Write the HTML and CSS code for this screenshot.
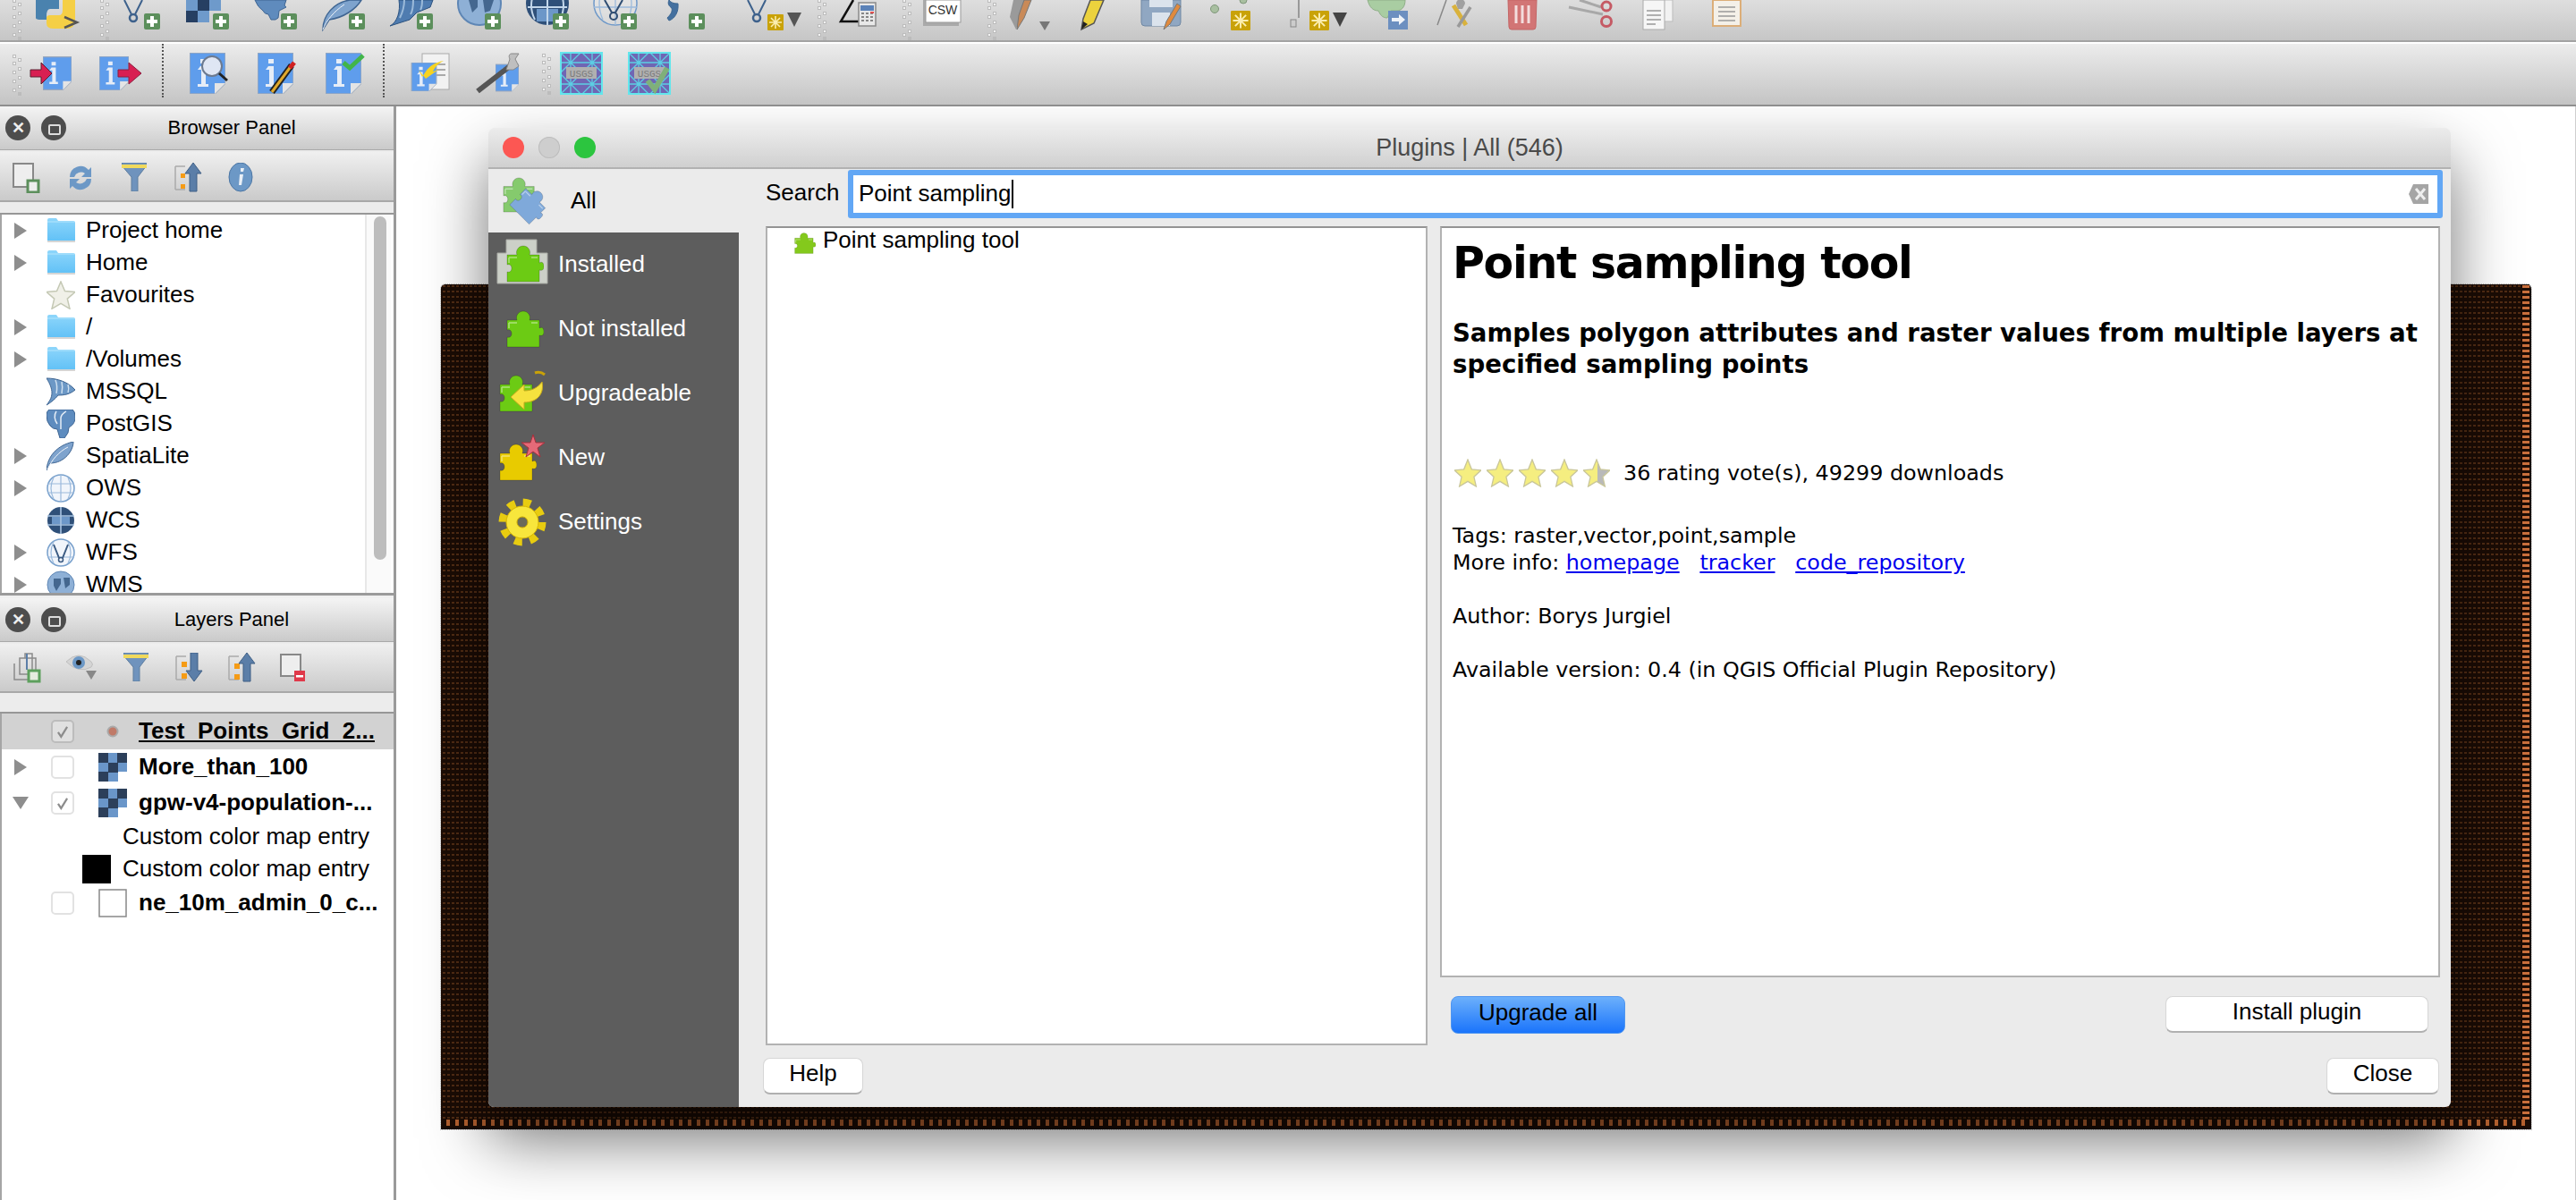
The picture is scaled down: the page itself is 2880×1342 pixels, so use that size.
FILE: index.html
```html
<!DOCTYPE html>
<html lang="en">
<head>
    <meta charset="UTF-8">
    <title>QGIS - Plugins</title>
    <link rel="stylesheet" href="styles.css">
</head>
<body>
<!-- shared icon parts -->
<svg class="defs">
    <defs>
        <linearGradient id="halfStar"><stop offset="55%" stop-color="#f5ee80"/><stop offset="55%" stop-color="#b9b9b9"/></linearGradient>
        <linearGradient id="folderFill" x1="0" y1="0" x2="0" y2="1"><stop offset="0" stop-color="#8ed6fb"/><stop offset="1" stop-color="#5fc0f6"/></linearGradient>
    </defs>
    <symbol id="plus" viewBox="0 0 18 18"><rect width="18" height="18" rx="2" fill="#5c8f5c"/><path d="M7 3h4v4h4v4h-4v4H7v-4H3V7h4z" fill="#fff"/></symbol>
    <symbol id="snow" viewBox="0 0 18 18"><rect width="18" height="18" rx="1" fill="#c9a208"/><path d="M9 2v14M2 9h14M4 4l10 10M14 4L4 14" stroke="#fbeeb0" stroke-width="1.6"/></symbol>
    <symbol id="grip" viewBox="0 0 12 48"><path d="M0 2h4v4H0zM6 6h4v4H6zM0 10h4v4H0zM6 16h4v4H6zM0 20h4v4H0zM6 26h4v4H6zM0 30h4v4H0zM6 36h4v4H6zM0 40h4v4H0zM6 44h4v4H6z" fill="#bcbcbc"/><path d="M1 3h2v2H1zM7 7h2v2H7zM1 11h2v2H1zM7 17h2v2H7zM1 21h2v2H1zM7 27h2v2H7zM1 31h2v2H1zM7 37h2v2H7zM1 41h2v2H1z" fill="#f2f2f2"/></symbol>
    <symbol id="page" viewBox="0 0 40 46"><path d="M0 0h40v34L28 46H0z" fill="#5f9dec" stroke="#9aa8bc" stroke-width="1.5"/><path d="M28 46V34h12z" fill="#e4e4e4"/><path d="M12 15h6v20h3v3H9v-3h4V19h-4zM12 7h6v5h-6z" fill="#e6edf7"/></symbol>
    <symbol id="puzzle" viewBox="0 0 42 42"><path d="M1 11h11c-2-5 2-10 7-10s9 5 7 10h11v9c3-2 5 0 5 4s-2 5-5 4v13H1V30c3 1 5-1 5-4s-2-5-5-4z" stroke="#00000030" stroke-width="1"/><path d="M3 14h9M28 14h7M3 14v6" stroke="#ffffff70" stroke-width="1.5" fill="none"/></symbol>
    <symbol id="folder" viewBox="0 0 32 28"><path d="M1 2q0-2 2-2h8l2 3h17q2 0 2 2v20q0 2-2 2H3q-2 0-2-2z" fill="url(#folderFill)"/><path d="M1 4h30" stroke="#b5e5fc" stroke-width="1"/><path d="M1 26h31" stroke="#d5d5d5" stroke-width="2"/></symbol>
    <symbol id="check" viewBox="0 0 26 26"><path d="M7 14l4 6 8-13" stroke="#8c8c8c" stroke-width="2.6" fill="none"/></symbol>
    <symbol id="raster" viewBox="0 0 32 32"><path d="M0 0h11v11H0zM21 0h11v11H21zM11 11h11v11H11zM0 21h11v11H0z" fill="#2c3f5a"/><path d="M11 0h10v11H11zM0 11h11v10H0zM22 11h10v10H22zM11 22h11v10H11z" fill="#6a96c9"/></symbol>
    <symbol id="star" viewBox="0 0 32 34"><path d="M16 1l4.600 11.500L32 13.600l-8.600 8 2.600 11.400L16 27l-10 6 2.600-11.400-8.600-8 11.400-1.100z" stroke="#c9c69a" stroke-width="1.4"/></symbol>
    <symbol id="usgs" viewBox="0 0 48 48"><rect width="48" height="48" fill="#6f66b4"/><path d="M0 0l48 48M48 0L0 48M24 0L0 24l24 24 24-24zM12 0v48M36 0v48M0 12h48M0 36h48" stroke="#5ccfe4" stroke-width="1.3" fill="none"/><rect x="1" y="1" width="46" height="46" fill="none" stroke="#62e6ec" stroke-width="2"/><rect x="7" y="17" width="34" height="13" fill="#b0b0b0"/></symbol>
    <symbol id="funnel" viewBox="0 0 28 32"><path d="M0 0h28v3L18 16v16h-7V16L0 3z" fill="#6f93bd" stroke="#5f7e9f"/><path d="M0 2h28v4H0z" fill="#f0d95c"/></symbol>
</svg>

<!-- main toolbar -->
<div class="bar bar-top">
    <svg width="12" height="45" viewBox="0 0 12 45"><use href="#grip" y="-3" width="12" height="48"/></svg>
    <svg width="86" height="45" viewBox="22 0 86 45"><path d="M36 20V0h26v10H52q-4 0-4 8v4h-6q-6 0-6-2z" fill="#4a82ae"/><path d="M66 0h14v22q0 10-10 10H56q-8 0-8-6v-6q0-3 4-3h10q4 0 4-6z" fill="#f5cf45"/><path d="M68 19l14 6-14 6" fill="none" stroke="#555" stroke-width="2.500"/></svg>
    <svg width="12" height="45" viewBox="0 0 12 45"><use href="#grip" y="-3" width="12" height="48"/></svg>
    <svg width="76" height="45" viewBox="120 0 76 45"><path d="M135 0l8 16M155 0l-8 16" stroke="#3d618c" stroke-width="2"/><circle cx="145" cy="20" r="4" fill="none" stroke="#3d618c" stroke-width="2.500"/><use href="#plus" x="157" y="15" width="18" height="18"/></svg>
    <svg width="76" height="45" viewBox="196 0 76 45"><path d="M204 0h13v12h-13zM230 0h13v12h-13zM217 12h13v13h-13z" fill="#6e9acb"/><path d="M217 0h13v12h-13zM204 12h13v13h-13z" fill="#263f62"/><use href="#plus" x="234" y="15" width="18" height="18"/></svg>
    <svg width="76" height="45" viewBox="272 0 76 45"><path d="M281 0h35l-2 6 2 2-8 4-1 8-3 2h-5l-3-6q-4 0-6-4-6-4-9-12z" fill="#5f8bbd" stroke="#3f6592"/><use href="#plus" x="310" y="15" width="18" height="18"/></svg>
    <svg width="76" height="45" viewBox="348 0 76 45"><path d="M357 33c0-16 12-30 30-33h13c-6 10-20 20-36 22z" fill="#7ea3cd" stroke="#3f6592" stroke-width="1.500"/><path d="M357 33c4-10 12-20 24-28" stroke="#eef3f9" fill="none"/><use href="#plus" x="386" y="15" width="18" height="18"/></svg>
    <svg width="76" height="45" viewBox="424 0 76 45"><path d="M432 29c8-4 12-16 10-29h38l-3 8-15 6-8 8z" fill="#4f7cb0" stroke="#2c527f"/><path d="M448 0c0 8-2 14-5 20M458 0c0 6 0 11-3 16M468 0c0 4 0 8-2 11" stroke="#9bbad9" stroke-width="2" fill="none"/><use href="#plus" x="462" y="15" width="18" height="18"/></svg>
    <svg width="76" height="45" viewBox="500 0 76 45"><circle cx="532" cy="4" r="24" fill="#8eb0d6" stroke="#5e86b5" stroke-width="2"/><path d="M520 0h10v8l-6 6zM536 0h12l-4 12-6 2z" fill="#44678f"/><use href="#plus" x="538" y="15" width="18" height="18"/></svg>
    <svg width="76" height="45" viewBox="576 0 76 45"><circle cx="608" cy="4" r="24" fill="#2f5079"/><path d="M596 10h24v14h-24z" fill="#6c97c8"/><path d="M586 8h44M608 -20v48M594 -10q-8 16 0 32M622 -10q8 16 0 32" stroke="#c2d6ea" stroke-width="2" fill="none"/><use href="#plus" x="614" y="15" width="18" height="18"/></svg>
    <svg width="76" height="45" viewBox="652 0 76 45"><circle cx="684" cy="4" r="24" fill="#fff" fill-opacity=".2" stroke="#6f99c9" stroke-width="1.500"/><path d="M660 8h48M684 -20v48M670 -14q-8 18 0 36M698 -14q8 18 0 36" stroke="#9dbbdc" stroke-width="1.300" fill="none"/><path d="M672 0l8 14M692 0l-8 14" stroke="#2f4d72" stroke-width="2"/><circle cx="682" cy="18" r="4" fill="none" stroke="#2f4d72" stroke-width="2"/><use href="#plus" x="690" y="15" width="18" height="18"/></svg>
    <svg width="76" height="45" viewBox="728 0 76 45"><path d="M744 0c2 3 5 4 10 4 1 10-4 17-10 19l-2-3c4-4 6-7 5-11-3-2-5-5-3-9z" fill="#44709f" stroke="#3b6590"/><use href="#plus" x="766" y="15" width="18" height="18"/></svg>
    <svg width="102" height="45" viewBox="804 0 102 45"><path d="M832 0l8 16M852 0l-8 16" stroke="#3d618c" stroke-width="2"/><circle cx="842" cy="20" r="4" fill="none" stroke="#3d618c" stroke-width="2.500"/><use href="#snow" x="854" y="16" width="18" height="18"/><path d="M876 14h16l-8 16z" fill="#555"/></svg>
    <svg width="24" height="45" viewBox="-4 0 24 45"><use href="#grip" y="-3" width="12" height="48"/></svg>
    <svg width="70" height="45" viewBox="930 0 70 45"><path d="M950 0l-14 24h20" fill="none" stroke="#111" stroke-width="2.500"/><rect x="956" y="3" width="19" height="26" fill="#e8e8e8" stroke="#8a8a8a" stroke-width="1.500"/><rect x="958" y="6" width="15" height="6" fill="#5b82b8"/><path d="M959 15h3M964 15h3M969 15h3M959 19h3M964 19h3M969 19h3M959 23h3M964 23h3M969 23h3" stroke="#666" stroke-width="1.500"/><rect x="969" y="13" width="4" height="2" fill="#e05050"/></svg>
    <svg width="24" height="45" viewBox="-5 0 24 45"><use href="#grip" y="-3" width="12" height="48"/></svg>
    <svg width="72" height="45" viewBox="1024 0 72 45"><rect x="1028" y="0" width="40" height="29" fill="#aaa"/><rect x="1031" y="0" width="39" height="25" fill="#fff" stroke="#999"/><text x="1050" y="16" class="csw-text" text-anchor="middle">CSW</text></svg>
    <svg width="24" height="45" viewBox="-4 0 24 45"><use href="#grip" y="-3" width="12" height="48"/></svg>
    <svg width="70" height="45" viewBox="1120 0 70 45"><path d="M1132 33l-7-14 4-19h14z" fill="#9a9a9a"/><path d="M1133 33l2-16 6-17h8l-8 20z" fill="#c98a58" stroke="#777"/><path d="M1158 24h12l-6 10z" fill="#777"/></svg>
    <svg width="70" height="45" viewBox="1190 0 70 45"><path d="M1205 33l2-12 8-21h15l-11 26z" fill="#ecd23d" stroke="#555" stroke-width="1.500"/><path d="M1205 33l2-9 5 3z" fill="#222"/></svg>
    <svg width="76" height="45" viewBox="1260 0 76 45"><path d="M1272 0h44v25q0 4-4 4h-36q-4 0-4-4z" fill="#90a7c2" stroke="#6f87a3"/><rect x="1284" y="14" width="20" height="15" fill="#dbe3ec"/><rect x="1281" y="0" width="26" height="8" fill="#dbe3ec"/><path d="M1297 33l3-9 12-20 4 3-12 20z" fill="#e08a3e" stroke="#777"/></svg>
    <svg width="84" height="45" viewBox="1336 0 84 45"><circle cx="1354" cy="10" r="4.500" fill="#a8bfa0" stroke="#7f967a"/><circle cx="1386" cy="0" r="4" fill="#a8bfa0" stroke="#7f967a"/><use href="#snow" x="1372" y="12" width="22" height="22"/></svg>
    <svg width="96" height="45" viewBox="1420 0 96 45"><path d="M1448 0v20" stroke="#999" stroke-width="2"/><rect x="1439" y="22" width="6" height="8" fill="#ccc" stroke="#888"/><use href="#snow" x="1460" y="12" width="22" height="22"/><path d="M1486 14h16l-8 16z" fill="#444"/></svg>
    <svg width="76" height="45" viewBox="1516 0 76 45"><path d="M1525 0h42c0 8-4 12-10 12h-6l-4 8c-6 0-8-4-10-8-6 0-10-4-12-12z" fill="#a9cda2" stroke="#8fae88"/><rect x="1548" y="12" width="22" height="21" fill="#6c8fc0"/><path d="M1552 20h8v-4l7 6-7 6v-4h-8z" fill="#eef2f8"/></svg>
    <svg width="76" height="45" viewBox="1592 0 76 45"><path d="M1603 28l10-28" stroke="#888" stroke-width="1.500"/><path d="M1621 6l14 22" stroke="#d9b23c" stroke-width="5"/><path d="M1640 8l-14 22" stroke="#999" stroke-width="3.500"/><path d="M1624 4a5 5 0 0 1 10 0l-3 6h-5z" fill="#a0a0a0"/></svg>
    <svg width="72" height="45" viewBox="1668 0 72 45"><path d="M1682 0h32l-1 30q0 3-3 3h-24q-3 0-3-3z" fill="#d27575" stroke="#c36565"/><path d="M1691 6v20M1698 6v20M1705 6v20" stroke="#f3dddd" stroke-width="3"/></svg>
    <svg width="76" height="45" viewBox="1740 0 76 45"><path d="M1750 8l38 8M1762 0l24 8" stroke="#a8a8a8" stroke-width="3"/><circle cx="1792" cy="7" r="5" fill="none" stroke="#c55a64" stroke-width="3"/><circle cx="1792" cy="24" r="5.500" fill="none" stroke="#c55a64" stroke-width="3"/></svg>
    <svg width="80" height="45" viewBox="1816 0 80 45"><rect x="1846" y="0" width="20" height="24" fill="#f2f2f2" stroke="#bbb"/><rect x="1833" y="0" width="24" height="33" fill="#f6f6f6" stroke="#aaa"/><path d="M1837 12h16M1837 17h16M1837 22h16M1837 27h10" stroke="#999" stroke-width="1.500"/></svg>
    <svg width="74" height="45" viewBox="1896 0 74 45"><rect x="1911" y="0" width="31" height="29" fill="#f4f0e8" stroke="#dcae78" stroke-width="2"/><path d="M1917 8h19M1917 13h19M1917 18h19M1917 23h19" stroke="#999" stroke-width="1.500"/></svg>
</div>

<div class="bar bar-second">
    <svg width="15" height="68" viewBox="0 0 15 68"><use href="#grip" y="10" width="12" height="48"/></svg>
    <svg width="81" height="68" viewBox="29 49 81 68"><use href="#page" x="48" y="63" width="32" height="38"/><path d="M34 78h12v-8l12 12-12 12v-8H34z" fill="#d81f52" stroke="#5a2030"/></svg>
    <svg width="71" height="68" viewBox="110 49 71 68"><use href="#page" x="111" y="63" width="33" height="38"/><path d="M132 78h12v-8l14 12-14 12v-8h-12z" fill="#d81f52" stroke="#8a2040"/></svg>
    <span class="sep"></span>
    <svg width="75" height="68" viewBox="183 49 75 68"><use href="#page" x="210" y="59" width="40" height="46"/><circle cx="235" cy="74" r="11" fill="#dfe6f4" stroke="#6c7a90" stroke-width="2"/><path d="M243 82l9 8" stroke="#222" stroke-width="3"/></svg>
    <svg width="76" height="68" viewBox="258 49 76 68"><use href="#page" x="286" y="59" width="40" height="46"/><path d="M302 103l22-30" stroke="#222" stroke-width="7"/><path d="M302 103l22-30" stroke="#e0a82c" stroke-width="3"/><path d="M322 76l5-6" stroke="#d02020" stroke-width="5"/></svg>
    <svg width="92" height="68" viewBox="334 49 92 68"><use href="#page" x="362" y="59" width="40" height="46"/><path d="M382 70l7 6 15-14" fill="none" stroke="#41b54a" stroke-width="5"/></svg>
    <span class="sep"></span>
    <svg width="100" height="68" viewBox="430 49 100 68"><rect x="470" y="60" width="30" height="40" fill="#f2f2f2" stroke="#aaa"/><path d="M478 72h18M478 78h18M478 84h18" stroke="#aaa" stroke-width="2"/><use href="#page" x="456" y="70" width="32" height="32"/><path d="M466 78l4 8 4-6c4-6 10-10 20-12-8 4-10 8-12 12l6-2-14 10z" fill="#f7d320"/><rect x="456" y="102" width="42" height="3" fill="#ccc"/></svg>
    <svg width="70" height="68" viewBox="530 49 70 68"><use href="#page" x="552" y="70" width="26" height="34"/><path d="M532 102l36-28" stroke="#555" stroke-width="6"/><path d="M564 78l4-12c-2-4 0-6 2-6l8 0-4 6 4 8-6 4z" fill="#bfbfbf" stroke="#888"/></svg>
    <svg width="24" height="68" viewBox="-4 0 24 68"><use href="#grip" y="9" width="12" height="48"/></svg>
    <svg width="76" height="68" viewBox="624 49 76 68"><use href="#usgs" x="624" y="58" width="48" height="48"/><text x="648" y="85.500" class="usgs-text" text-anchor="middle">USGS</text></svg>
    <svg width="76" height="68" viewBox="700 49 76 68"><use href="#usgs" x="700" y="58" width="48" height="48"/><text x="724" y="85.500" class="usgs-text" text-anchor="middle">USGS</text><path d="M722 90l8 10 14-24" fill="none" stroke="#7fb07a" stroke-width="6"/></svg>
</div>

<div class="main">
    <div class="dock">
        <!-- browser panel -->
        <div class="panel-title">
            <span class="dock-btn">&#10005;</span>
            <span class="dock-btn dock-float"></span>
            <span class="panel-name">Browser Panel</span>
        </div>
        <div class="panel-tools">
            <svg width="32" height="34" viewBox="0 0 32 34"><rect x="1" y="1" width="22" height="26" fill="#eee" stroke="#888" stroke-width="2"/><rect x="17" y="20" width="12" height="13" fill="#eee" stroke="#5c8f5c" stroke-width="3"/></svg>
            <svg width="32" height="34" viewBox="0 0 32 34"><path d="M4 16A12 12 0 0 1 25 8l3-3v11H17l4-4A8 8 0 0 0 9 16zM28 18a12 12 0 0 1-21 8l-3 3V18h11l-4 4a8 8 0 0 0 12-4z" fill="#6c98c6"/></svg>
            <svg width="32" height="34" viewBox="0 0 32 34"><use href="#funnel" x="2" y="0" width="28" height="32"/></svg>
            <svg width="32" height="34" viewBox="0 0 32 34"><path d="M2 4h11M2 30h11M2 4v26" stroke="#aaa" stroke-width="1.500" fill="none"/><path d="M8 12h5v5H8zM8 24h5v5H8z" fill="#f59b15"/><path d="M22 0l9 12h-5v20h-8V12h-5z" fill="#5b7ea8" stroke="#3f5f85"/></svg>
            <svg width="32" height="34" viewBox="0 0 32 34"><ellipse cx="15" cy="16" rx="13" ry="16" fill="#6c98c6" stroke="#4c76a4"/><path d="M14 13h4l-2 12h-3zM15 6h4l-1 4h-3z" fill="#e9eff6"/></svg>
        </div>
        <div class="panel-strip"></div>
        <div class="tree">
            <div class="tree-rows">
                <div class="row"><span class="tw"></span><svg class="ico" viewBox="0 0 32 28"><use href="#folder"/></svg>Project home</div>
                <div class="row"><span class="tw"></span><svg class="ico" viewBox="0 0 32 28"><use href="#folder"/></svg>Home</div>
                <div class="row"><span class="tw-none"></span><svg class="ico" viewBox="0 0 32 32"><path d="M16 1l4.500 10.500L32 12.500l-8.700 7.600 2.700 11.200-10-6-10 6 2.700-11.200L0 12.500l11.500-1z" fill="#f0f0e8" stroke="#c4c8b4" stroke-width="1.500"/></svg>Favourites</div>
                <div class="row"><span class="tw"></span><svg class="ico" viewBox="0 0 32 28"><use href="#folder"/></svg>/</div>
                <div class="row"><span class="tw"></span><svg class="ico" viewBox="0 0 32 28"><use href="#folder"/></svg>/Volumes</div>
                <div class="row"><span class="tw-none"></span><svg class="ico" viewBox="0 0 32 32"><path d="M0 1c12 0 24 4 32 13-6 5-12 6-19 6-3 4-8 8-13 11 5-6 6-10 6-14S4 7 0 1z" fill="#6c98c6" stroke="#3f6592"/><path d="M10 3c2 5 2 10 1 15M17 5c1 4 1 8 0 13M24 8c1 3 1 6 0 9" stroke="#cfe0f0" stroke-width="1.500" fill="none"/></svg>MSSQL</div>
                <div class="row"><span class="tw-none"></span><svg class="ico" viewBox="0 0 32 32"><path d="M3 0h26q3 2 3 8c0 8-4 10-7 12l-1 6-4 6h-5l-3-10q-5 0-8-4Q0 14 0 6q0-4 3-6z" fill="#5e8cbf" stroke="#3f6592"/><path d="M11 2c-3 4-2 10 1 14M22 2c-3 2-6 3-6 8v12" stroke="#e5edf6" stroke-width="1.500" fill="none"/></svg>PostGIS</div>
                <div class="row"><span class="tw"></span><svg class="ico" viewBox="0 0 32 32"><path d="M0 32C1 16 12 4 30 0c0 10-10 24-26 24z" fill="#7ea3cd" stroke="#3f6592"/><path d="M1 31C6 20 14 11 24 6" stroke="#eef3f9" fill="none"/></svg>SpatiaLite</div>
                <div class="row"><span class="tw"></span><svg class="ico" viewBox="0 0 32 32"><circle cx="16" cy="16" r="15" fill="#f1f5fb" stroke="#78a0cc" stroke-width="1.500"/><path d="M1 11h30M1 21h30M16 1v30M8 4q-6 12 0 24M24 4q6 12 0 24" stroke="#9bbadc" fill="none" stroke-width="1.200"/></svg>OWS</div>
                <div class="row"><span class="tw-none"></span><svg class="ico" viewBox="0 0 32 32"><circle cx="16" cy="16" r="15" fill="#2f5079"/><path d="M6 12h20v8H6z" fill="#6c97c8"/><path d="M1 11h30M1 21h30M16 1v30" stroke="#a8c4e2" stroke-width="1.600"/></svg>WCS</div>
                <div class="row"><span class="tw"></span><svg class="ico" viewBox="0 0 32 32"><circle cx="16" cy="16" r="15" fill="#f1f5fb" stroke="#78a0cc" stroke-width="1.500"/><path d="M1 21h30M8 4q-6 12 0 24M24 4q6 12 0 24" stroke="#9bbadc" fill="none" stroke-width="1.200"/><path d="M8 7l6 15M24 7l-6 15" stroke="#3b5b82" stroke-width="2"/><circle cx="16" cy="24" r="2.500" fill="none" stroke="#3b5b82" stroke-width="1.500"/></svg>WFS</div>
                <div class="row"><span class="tw"></span><svg class="ico" viewBox="0 0 32 32"><circle cx="16" cy="16" r="15" fill="#8eb0d6" stroke="#5e86b5"/><path d="M8 9h8v6l-5 8-3-6zM19 8h7v8l-5 4z" fill="#44678f"/></svg>WMS</div>
            </div>
            <div class="gutter"><div class="thumb"></div></div>
        </div>
        <div class="panel-gap"></div>

        <!-- layers panel -->
        <div class="panel-title">
            <span class="dock-btn">&#10005;</span>
            <span class="dock-btn dock-float"></span>
            <span class="panel-name">Layers Panel</span>
        </div>
        <div class="panel-tools panel-tools-layers">
            <svg width="32" height="34" viewBox="0 0 32 34"><path d="M2 12v18h18M8 6v18h18V6zM14 6V1h8v22" fill="none" stroke="#8a8a8a" stroke-width="1.500"/><path d="M16 1v18" stroke="#5b7ea8" stroke-width="2"/><rect x="18" y="20" width="12" height="12" fill="#e5ecdf" stroke="#5da05d" stroke-width="3"/></svg>
            <svg width="36" height="34" viewBox="0 0 36 34"><path d="M1 10q14-14 28 0 3 3 0 6-14 8-28-6z" fill="#d5d5d5" stroke="#c0c0c0"/><circle cx="15" cy="11" r="7" fill="#6c98c6"/><circle cx="15" cy="11" r="3" fill="#222"/><path d="M23 20h12l-6 10z" fill="#888"/></svg>
            <svg width="32" height="34" viewBox="0 0 32 34"><use href="#funnel" x="2" y="0" width="28" height="32"/></svg>
            <svg width="32" height="34" viewBox="0 0 32 34"><path d="M2 4h11M2 30h11M2 4v26" stroke="#aaa" stroke-width="1.500" fill="none"/><path d="M8 10h6v6H8zM8 23h6v6H8z" fill="#f59b15"/><path d="M22 32l9-12h-5V0h-8v20h-5z" fill="#5b7ea8" stroke="#3f5f85"/></svg>
            <svg width="32" height="34" viewBox="0 0 32 34"><path d="M2 4h11M2 30h11M2 4v26" stroke="#aaa" stroke-width="1.500" fill="none"/><path d="M8 12h6v6H8zM8 24h6v6H8z" fill="#f59b15"/><path d="M22 0l9 12h-5v20h-8V12h-5z" fill="#5b7ea8" stroke="#3f5f85"/></svg>
            <svg width="32" height="34" viewBox="0 0 32 34"><rect x="1" y="2" width="22" height="24" fill="#eee" stroke="#888" stroke-width="2"/><rect x="16" y="20" width="12" height="12" fill="#e0394a"/><rect x="18" y="25" width="8" height="2.500" fill="#fff"/></svg>
        </div>
        <div class="panel-strip panel-strip-layers"></div>
        <div class="layers">
            <div class="layer layer-on">
                <span class="tw-none"></span>
                <span class="chk chk-sel"><svg viewBox="0 0 26 26"><use href="#check"/></svg></span>
                <svg class="ico-layer" viewBox="0 0 32 32"><circle cx="16" cy="16" r="5.500" fill="#c07a68" stroke="#aaa" stroke-width="2"/></svg>
                <b class="cur">Test_Points_Grid_2...</b>
            </div>
            <div class="layer">
                <span class="tw"></span>
                <span class="chk"></span>
                <svg class="ico-layer" viewBox="0 0 32 32"><use href="#raster"/></svg>
                <b>More_than_100</b>
            </div>
            <div class="layer">
                <span class="tw tw-open"></span>
                <span class="chk"><svg viewBox="0 0 26 26"><use href="#check"/></svg></span>
                <svg class="ico-layer" viewBox="0 0 32 32"><use href="#raster"/></svg>
                <b>gpw-v4-population-...</b>
            </div>
            <div class="legend"><span class="swatch swatch-none"></span>Custom color map entry</div>
            <div class="legend"><span class="swatch"></span>Custom color map entry</div>
            <div class="layer">
                <span class="tw-none"></span>
                <span class="chk"></span>
                <svg class="ico-layer" viewBox="0 0 32 32"><rect x="1" y="1" width="30" height="30" fill="#fff" stroke="#888" stroke-width="1.500"/></svg>
                <b>ne_10m_admin_0_c...</b>
            </div>
        </div>
    </div>

    <div class="map">
        <div class="canvas"></div>

        <!-- plugins dialog -->
        <div class="dialog">
            <div class="titlebar">
                <span class="light light-red"></span>
                <span class="light light-grey"></span>
                <span class="light light-green"></span>
                <span class="dialog-title">Plugins | All (546)</span>
            </div>
            <div class="dialog-body">
                <div class="side">
                    <div class="side-all">
                        <svg width="92" height="71" viewBox="0 0 92 71">
                            <use href="#puzzle" x="16" y="8" width="40" height="42" fill="#85ca6d"/>
                            <g transform="rotate(45 48 40)"><use href="#puzzle" x="30" y="22" width="36" height="36" fill="#7fa9da"/></g>
                        </svg>
                        <span>All</span>
                    </div>
                    <div class="side-list">
                        <div class="side-item">
                            <svg width="78" height="72" viewBox="0 0 78 72"><path d="M20 8h34v15h12v34H10V23h10z" fill="#ccd0c8" stroke="#a8aaa4"/><use href="#puzzle" x="20" y="14" width="42" height="42" fill="#6ccb14"/></svg>
                            Installed
                        </div>
                        <div class="side-item">
                            <svg width="78" height="72" viewBox="0 0 78 72"><use href="#puzzle" x="20" y="15" width="42" height="42" fill="#6ccb14"/></svg>
                            Not installed
                        </div>
                        <div class="side-item">
                            <svg width="78" height="72" viewBox="0 0 78 72"><use href="#puzzle" x="12" y="15" width="42" height="42" fill="#6ccb14"/><path d="M25 40l15-14v7c8 0 15-3 20-10 3 15-7 23-20 23v8z" fill="#f6e23e" stroke="#c3a81e"/><path d="M52 13q6-2 11 2" stroke="#c9a208" stroke-width="3" fill="none"/></svg>
                            Upgradeable
                        </div>
                        <div class="side-item">
                            <svg width="78" height="72" viewBox="0 0 78 72"><use href="#puzzle" x="12" y="20" width="42" height="42" fill="#e8cb00"/><path d="M50 10l3 9 10 0-8 6 3 10-8-6-8 6 3-10-8-6 10 0z" fill="#e56a78" stroke="#a8303c"/></svg>
                            New
                        </div>
                        <div class="side-item">
                            <svg width="78" height="72" viewBox="0 0 78 72"><circle cx="38" cy="36" r="21" fill="none" stroke="#e8cc10" stroke-width="11" stroke-dasharray="8.250 8.250"/><circle cx="38" cy="36" r="18" fill="#f8e63c" stroke="#d6b400" stroke-width="1"/><circle cx="38" cy="36" r="6" fill="#6a6a5a" stroke="#c7a400"/></svg>
                            Settings
                        </div>
                    </div>
                </div>
                <div class="content">
                    <div class="search-row">
                        <label class="search-label">Search</label>
                        <div class="search-box">
                            <span class="search-text">Point sampling</span><span class="caret"></span>
                            <svg class="clear" width="24" height="24" viewBox="0 0 24 24"><path d="M6 1h17v22H6L1 12z" fill="#a5a5a5"/><path d="M9 6l10 12M19 6L9 18" stroke="#eee" stroke-width="3"/></svg>
                        </div>
                    </div>
                    <div class="panes">
                        <div class="plugin-list">
                            <div class="plugin-row">
                                <svg width="24" height="24" viewBox="0 0 42 42"><use href="#puzzle" fill="#84c91c"/></svg>
                                Point sampling tool
                            </div>
                        </div>
                        <div class="right">
                            <div class="detail">
                                <h1>Point sampling tool</h1>
                                <p class="lead">Samples polygon attributes and raster values from multiple layers at specified sampling points</p>
                                <div class="rating">
                                    <span class="stars">
                                        <svg viewBox="0 0 32 34"><use href="#star" fill="#f5ee80"/></svg>
                                        <svg viewBox="0 0 32 34"><use href="#star" fill="#f5ee80"/></svg>
                                        <svg viewBox="0 0 32 34"><use href="#star" fill="#f5ee80"/></svg>
                                        <svg viewBox="0 0 32 34"><use href="#star" fill="#f5ee80"/></svg>
                                        <svg viewBox="0 0 32 34"><use href="#star" fill="url(#halfStar)"/></svg>
                                    </span>
                                    36 rating vote(s), 49299 downloads
                                </div>
                                <p class="meta">Tags: raster,vector,point,sample<br>More info: <a href="#">homepage</a>&nbsp;&nbsp; <a href="#">tracker</a>&nbsp;&nbsp; <a href="#">code_repository</a></p>
                                <p class="meta meta-next">Author: Borys Jurgiel</p>
                                <p class="meta meta-next">Available version: 0.4 (in QGIS Official Plugin Repository)</p>
                            </div>
                            <div class="actions">
                                <button class="btn btn-blue">Upgrade all</button>
                                <button class="btn btn-install">Install plugin</button>
                            </div>
                        </div>
                    </div>
                    <div class="footer">
                        <button class="btn btn-small">Help</button>
                        <button class="btn btn-small">Close</button>
                    </div>
                </div>
            </div>
        </div>
    </div>
</div>
</body>
</html>
```

FILE: styles.css
```css
html, body {
    margin: 0;
    padding: 0;
}

body {
    width: 2880px;
    height: 1342px;
    overflow: hidden;
    background: #fff;
    font: 26px/1.2 "Liberation Sans", Arial, sans-serif;
    color: #000;
    display: flex;
    flex-direction: column;
}

svg {
    display: block;
    flex: none;
}

.defs {
    position: absolute;
    width: 0;
    height: 0;
}

.usgs-text {
    font: 11px "Liberation Mono", monospace;
    fill: #7c7c7c;
}

.csw-text {
    font: 14px "Liberation Sans", sans-serif;
    fill: #333;
}

/* toolbars */
.bar {
    display: flex;
    flex: none;
    padding-left: 14px;
    box-sizing: border-box;
}

.bar-top {
    height: 47px;
    border-bottom: 2px solid #a2a2a2;
    background: linear-gradient(#dedede, #c6c6c6);
}

.bar-second {
    height: 72px;
    border-top: 2px solid #fff;
    border-bottom: 2px solid #8e8e8e;
    background: linear-gradient(#ececec, #c4c4c4);
}

.sep {
    width: 0;
    height: 60px;
    margin: 0 2px 0 0;
    border-left: 2px dotted #555;
}

/* left dock */
.main {
    display: flex;
    flex: 1;
    min-height: 0;
}

.dock {
    width: 443px;
    flex: none;
    box-sizing: border-box;
    border-right: 3px solid #9a9a9a;
    display: flex;
    flex-direction: column;
    background: #ececec;
}

.panel-title {
    height: 49px;
    flex: none;
    display: flex;
    align-items: center;
    padding-left: 6px;
    box-sizing: border-box;
    border-bottom: 1px solid #a9a9a9;
    background: linear-gradient(#f4f4f4, #cacaca);
}

.dock-btn {
    width: 28px;
    height: 28px;
    margin-right: 12px;
    border-radius: 50%;
    background: #4d4d4d;
    color: #eee;
    font-size: 18px;
    font-weight: bold;
    line-height: 28px;
    text-align: center;
}

.dock-float {
    position: relative;
}

.dock-float::after {
    content: "";
    position: absolute;
    left: 8px;
    top: 10px;
    width: 10px;
    height: 8px;
    border: 2px solid #ddd;
    border-radius: 2px;
}

.panel-name {
    flex: 1;
    padding-right: 8px;
    text-align: center;
    font-size: 22px;
}

.panel-tools {
    height: 56px;
    flex: none;
    box-sizing: border-box;
    margin-top: 2px;
    padding: 12px 0 0 14px;
    display: flex;
    gap: 28px;
    border-bottom: 2px solid #a8a8a8;
    background: linear-gradient(#f0f0f0, #cacaca);
}

.panel-tools-layers {
    height: 55px;
    padding-top: 10px;
    gap: 27px;
}

.panel-strip {
    height: 12px;
    flex: none;
    border-bottom: 2px solid #979797;
}

.panel-strip-layers {
    height: 21px;
}

.tree {
    height: 423px;
    flex: none;
    display: flex;
    overflow: hidden;
    background: #fff;
    border-left: 2px solid #a5a5a5;
}

.tree-rows {
    flex: 1;
    min-width: 0;
}

.row {
    height: 36px;
    display: flex;
    align-items: center;
    padding-left: 14px;
    white-space: nowrap;
}

.tw, .tw-none {
    width: 14px;
    height: 18px;
    margin-right: 22px;
    flex: none;
}

.tw {
    background: #8e8e8e;
    clip-path: polygon(0 0, 100% 50%, 0 100%);
}

.tw-open {
    width: 18px;
    height: 14px;
    margin-left: -2px;
    clip-path: polygon(0 0, 100% 0, 50% 100%);
}

.ico {
    width: 32px;
    height: 32px;
    margin-right: 12px;
}

.gutter {
    width: 29px;
    flex: none;
    margin-right: 3px;
    box-sizing: border-box;
    padding: 2px 5px 0 8px;
    border-left: 2px solid #e8e8e8;
    background: #fafafa;
}

.thumb {
    height: 384px;
    border-radius: 8px;
    background: #bdbdbd;
}

.panel-gap {
    height: 6px;
    flex: none;
    border-top: 3px solid #9a9a9a;
    background: #f0f0f0;
    box-sizing: border-box;
}

.layers {
    flex: 1;
    background: #fff;
    border-left: 2px solid #a5a5a5;
}

.layer {
    height: 40px;
    display: flex;
    align-items: center;
    padding-left: 14px;
    white-space: nowrap;
}

.layer .tw, .layer .tw-none {
    margin-right: 27px;
}

.layer .tw-open {
    margin-right: 25px;
}

.layer-on {
    background: #d2d2d2;
}

.cur {
    text-decoration: underline;
}

.chk {
    width: 26px;
    height: 26px;
    flex: none;
    box-sizing: border-box;
    margin-right: 27px;
    border: 2px solid #e2e2e2;
    border-radius: 5px;
    background: #fff;
}

.chk svg {
    width: 22px;
    height: 22px;
}

.chk-sel {
    border-color: #bcbcbc;
    background: #e0e0e0;
}

.ico-layer {
    width: 32px;
    height: 32px;
    margin-right: 13px;
}

.legend {
    height: 36px;
    display: flex;
    align-items: center;
    padding-left: 90px;
    white-space: nowrap;
}

.swatch {
    width: 32px;
    height: 32px;
    margin-right: 13px;
    background: #000;
}

.swatch-none {
    background: none;
}

/* map area, free canvas behind the dialog */
.map {
    flex: 1;
    position: relative;
    overflow: hidden;
    border-right: 1px solid #cfcfcf;
    background: #fff;
}

.canvas {
    position: absolute;
    left: 50px;
    top: 199px;
    width: 2337px;
    height: 945px;
    box-sizing: border-box;
    border-radius: 5px 5px 0 0;
    border-right: 2px solid #160a04;
    border-bottom: 2px solid #160a04;
    outline: 1px dotted #bbb;
    background:
        repeating-linear-gradient(90deg, #1b0c05 0 2px, #ffffff00 2px 5px),
        repeating-linear-gradient(0deg, #1b0c05 0 4px, #512c14 4px 6px);
}

.canvas::before {
    content: "";
    position: absolute;
    right: 0;
    top: 0;
    bottom: 0;
    width: 8px;
    background: repeating-linear-gradient(0deg, #1b0c05 0 3px, #c96f3c 3px 6px);
}

.canvas::after {
    content: "";
    position: absolute;
    left: 0;
    right: 0;
    bottom: 2px;
    height: 7px;
    background: repeating-linear-gradient(90deg, #1b0c05 0 6px, #b5612f 6px 10px);
}

.dialog {
    position: absolute;
    left: 103px;
    top: 24px;
    width: 2194px;
    height: 1095px;
    display: flex;
    flex-direction: column;
    border-radius: 8px 8px 6px 6px;
    background: #ebebeb;
    box-shadow: 0 36px 70px rgba(0, 0, 0, .55);
    overflow: hidden;
}

.titlebar {
    height: 46px;
    flex: none;
    box-sizing: border-box;
    display: flex;
    align-items: center;
    padding-left: 16px;
    gap: 16px;
    border-bottom: 2px solid #b2b2b2;
    background: linear-gradient(#ececec, #d0d0d0);
    position: relative;
}

.light {
    width: 24px;
    height: 24px;
    border-radius: 50%;
}

.light-red {
    background: #fc5753;
}

.light-grey {
    background: #cecece;
    box-shadow: inset 0 0 0 1px #bdbdbd;
}

.light-green {
    background: #2cc53f;
}

.dialog-title {
    position: absolute;
    left: 0;
    right: 0;
    text-align: center;
    font-size: 27px;
    color: #4a4a4a;
}

.dialog-body {
    flex: 1;
    display: flex;
    min-height: 0;
}

.side {
    width: 280px;
    flex: none;
    display: flex;
    flex-direction: column;
}

.side-all {
    height: 71px;
    flex: none;
    display: flex;
    align-items: center;
}

.side-list {
    flex: 1;
    background: #5d5d5d;
    color: #fff;
}

.side-item {
    height: 72px;
    display: flex;
    align-items: center;
}

.content {
    flex: 1;
    min-width: 0;
    box-sizing: border-box;
    padding: 1px 9px 15px 30px;
    display: flex;
    flex-direction: column;
}

.search-row {
    height: 54px;
    flex: none;
    display: flex;
    align-items: center;
    margin-bottom: 9px;
}

.search-label {
    width: 92px;
    flex: none;
    margin-top: -2px;
}

.search-box {
    flex: 1;
    height: 54px;
    box-sizing: border-box;
    border: 6px solid #62a7f5;
    border-radius: 3px;
    background: #fff;
    display: flex;
    align-items: center;
    padding: 0 9px 0 6px;
}

.caret {
    width: 2px;
    height: 32px;
    background: #000;
}

.clear {
    margin-left: auto;
}

.panes {
    display: flex;
    flex: 1;
    min-height: 0;
}

.plugin-list {
    width: 740px;
    flex: none;
    box-sizing: border-box;
    margin-right: 14px;
    background: #fff;
    border: 2px solid #b2b2b2;
    border-top-color: #949494;
    padding: 0 0 0 30px;
}

.plugin-row {
    display: flex;
    align-items: flex-start;
    gap: 8px;
    line-height: 26px;
}

.plugin-row svg {
    margin-top: 5px;
}

.right {
    flex: 1;
    min-width: 0;
    margin-right: 3px;
    display: flex;
    flex-direction: column;
}

.detail {
    height: 840px;
    flex: none;
    box-sizing: border-box;
    padding: 13px 8px 0 12px;
    background: #fff;
    border: 2px solid #b2b2b2;
    border-top-color: #949494;
    font: 23.800px/30px "DejaVu Sans", sans-serif;
}

.detail h1 {
    margin: 0;
    letter-spacing: -1.300px;
    font: bold 49px/54px "DejaVu Sans", sans-serif;
}

.lead {
    margin: 33px 0 0;
    font: bold 27.600px/35px "DejaVu Sans", sans-serif;
}

.rating {
    margin-top: 84px;
    height: 36px;
    display: flex;
    align-items: center;
    padding-top: 4px;
    box-sizing: border-box;
}

.stars {
    display: flex;
    gap: 6px;
    margin: 0 15px 0 2px;
}

.stars svg {
    width: 30px;
    height: 32px;
}

.meta {
    margin: 39px 0 0;
}

.meta-next {
    margin-top: 30px;
}

.meta a {
    color: #0000ee;
}

.actions {
    display: flex;
    justify-content: space-between;
    margin-top: 21px;
    padding: 0 13px 0 12px;
}

.btn {
    height: 41px;
    padding: 0 0 6px;
    box-sizing: border-box;
    border: 1px solid #d6d6d6;
    border-bottom: 2px solid #b0b0b0;
    border-radius: 8px;
    background: #fff;
    font: 26px "Liberation Sans", Arial, sans-serif;
    color: #000;
}

.btn-blue {
    width: 195px;
    height: 42px;
    border: 1px solid #4f95f0;
    background: linear-gradient(#6cb0fb, #1a74fb);
}

.btn-install {
    width: 294px;
}

.btn-small {
    width: 112px;
}

.footer {
    height: 40px;
    flex: none;
    margin: 14px 4px 0 -3px;
    display: flex;
    justify-content: space-between;
}

.footer .btn:last-child {
    width: 126px;
}
```
